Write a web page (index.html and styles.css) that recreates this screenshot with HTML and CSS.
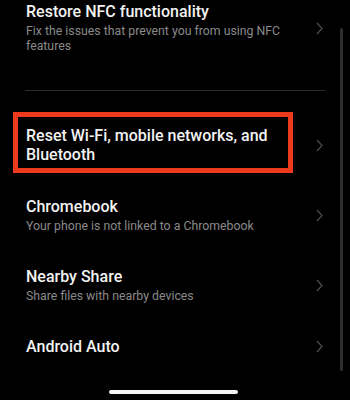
FILE: index.html
```html
<!DOCTYPE html>
<html>
<head>
<meta charset="utf-8">
<link rel="stylesheet" href="styles.css">
</head>
<body>
<div class="screen">
  <div class="list">
    <div class="row">
      <div class="text">
        <div class="title">Restore NFC functionality</div>
        <div class="sub">Fix the issues that prevent you from using NFC features</div>
      </div>
      <svg class="chev" viewBox="0 0 7 13" width="7" height="13"><path d="M1 1 L6 6.5 L1 12" fill="none" stroke="#4a4a4a" stroke-width="1.3"/></svg>
    </div>
    <div class="divider"></div>
    <div class="row">
      <div class="text">
        <div class="title">Reset Wi-Fi, mobile networks, and<br>Bluetooth</div>
      </div>
      <svg class="chev" viewBox="0 0 7 13" width="7" height="13"><path d="M1 1 L6 6.5 L1 12" fill="none" stroke="#4a4a4a" stroke-width="1.3"/></svg>
      <div class="highlight"></div>
    </div>
    <div class="row">
      <div class="text">
        <div class="title">Chromebook</div>
        <div class="sub">Your phone is not linked to a Chromebook</div>
      </div>
      <svg class="chev" viewBox="0 0 7 13" width="7" height="13"><path d="M1 1 L6 6.5 L1 12" fill="none" stroke="#4a4a4a" stroke-width="1.3"/></svg>
    </div>
    <div class="row">
      <div class="text">
        <div class="title">Nearby Share</div>
        <div class="sub">Share files with nearby devices</div>
      </div>
      <svg class="chev" viewBox="0 0 7 13" width="7" height="13"><path d="M1 1 L6 6.5 L1 12" fill="none" stroke="#4a4a4a" stroke-width="1.3"/></svg>
    </div>
    <div class="row">
      <div class="text">
        <div class="title">Android Auto</div>
      </div>
      <svg class="chev" viewBox="0 0 7 13" width="7" height="13"><path d="M1 1 L6 6.5 L1 12" fill="none" stroke="#4a4a4a" stroke-width="1.3"/></svg>
    </div>
  </div>
  <div class="scrollbar"></div>
  <div class="homebar"></div>
</div>
</body>
</html>
```
FILE: styles.css
```css
html, body {
  margin: 0;
  padding: 0;
  background: #000;
}
.screen {
  position: relative;
  width: 350px;
  height: 400px;
  overflow: hidden;
  background: #000;
  font-family: Roboto, "Noto Sans", sans-serif;
}
.list {
  margin-top: -14px;
}
.row {
  position: relative;
  display: flex;
  align-items: center;
  padding: 16px 27px 17px 26px;
}
.text {
  flex: 1;
  min-width: 0;
}
.title {
  color: #f2f2f2;
  font-size: 16px;
  line-height: 19px;
  font-weight: 500;
}
.sub {
  color: #8a8a8a;
  font-size: 12.3px;
  line-height: 15px;
  margin-top: 3px;
}
.chev {
  flex: none;
  margin-left: 12px;
}
.divider {
  height: 1px;
  background: #2b2b2b;
  margin: 19px 25px 19px 25px;
}
.highlight {
  position: absolute;
  left: 13px;
  top: 2px;
  width: 270px;
  height: 51px;
  border: 5px solid #ee3a1c;
}
.scrollbar {
  position: absolute;
  left: 340px;
  top: 28px;
  width: 3px;
  height: 343px;
  border-radius: 2px;
  background: #2e2e2e;
}
.homebar {
  position: absolute;
  left: 109px;
  top: 390px;
  width: 129px;
  height: 4px;
  border-radius: 2px;
  background: #f5f5f5;
}
```
